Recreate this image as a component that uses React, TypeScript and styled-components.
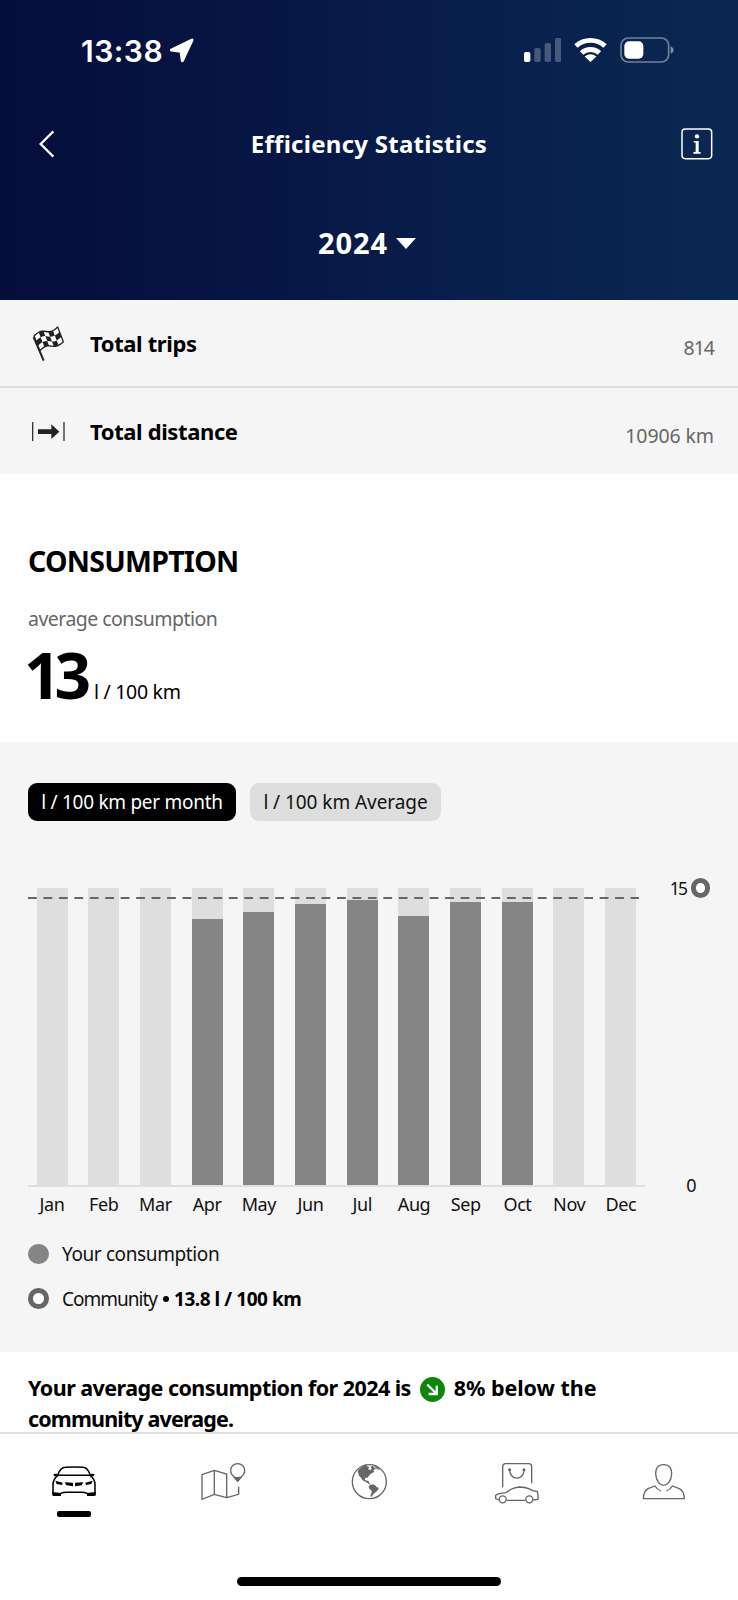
import React from "react";
import styled, { createGlobalStyle } from "styled-components";

const GlobalStyle = createGlobalStyle`
  * { box-sizing: border-box; }
  body { margin: 0; background: #fff; }
`;

const Screen = styled.div`
  width: 738px;
  height: 1600px;
  display: flex;
  flex-direction: column;
  overflow: hidden;
  background: #fefefe;
  color: #000;
  font-family: "Noto Sans", sans-serif;
  white-space: nowrap;
`;

const Header = styled.header`
  flex: none;
  height: 300px;
  color: #fff;
  background: linear-gradient(90deg, #050d3b 0%, #071644 35%, #081e4c 62%, #0a2852 100%);
`;

const StatusBar = styled.div`
  height: 100px;
  padding: 0 64px 0 81px;
  display: flex;
  align-items: center;
`;

const Clock = styled.span`
  font: 600 30px/40px Inter, sans-serif;
  letter-spacing: 0.5px;
  margin: 2px 6px 0 0;
`;

const StatusIcons = styled.div`
  margin-left: auto;
  display: flex;
  align-items: center;
  gap: 13px;
`;

const NavBar = styled.div`
  height: 87px;
  padding: 0 25px 0 38px;
  display: grid;
  grid-template-columns: 60px 1fr 73px;
  align-items: center;
  svg:last-child { justify-self: end; }
`;

const Title = styled.h1`
  margin: 0;
  font-size: 24px;
  font-weight: 700;
  line-height: 40px;
  letter-spacing: 0.27px;
  text-align: center;
`;

const YearPicker = styled.div`
  height: 112px;
  padding-left: 318px;
  display: flex;
  align-items: center;
  gap: 8px;
  font-size: 29px;
  font-weight: 700;
  letter-spacing: 0.9px;
  line-height: 40px;
`;

const Row = styled.div<{ $divided?: boolean }>`
  flex: none;
  height: ${(p) => (p.$divided ? 88 : 86)}px;
  border-bottom: ${(p) => (p.$divided ? "2px solid #dedede" : "0")};
  background: #f5f5f5;
  padding: 0 24px 0 29px;
  display: flex;
  align-items: center;
`;

const RowTitle = styled.span`
  margin-left: 21px;
  font-size: 22px;
  font-weight: 700;
  letter-spacing: -0.38px;
`;

const RowValue = styled.span<{ $spacing: number }>`
  margin: 9px 0 0 auto;
  font-size: 19.5px;
  color: #666;
  letter-spacing: ${(p) => p.$spacing}px;
`;

const Summary = styled.section`
  flex: none;
  height: 268px;
  padding: 67px 28px 0;
`;

const Heading = styled.h2`
  margin: 0;
  font-size: 28.5px;
  font-weight: 700;
  line-height: 40px;
  letter-spacing: -0.73px;
`;

const Caption = styled.div`
  margin-top: 23px;
  font-size: 19.5px;
  line-height: 30px;
  letter-spacing: -0.53px;
  color: #666;
`;

const Reading = styled.div`
  margin: 1px 0 0 -4px;
  display: flex;
  align-items: baseline;
`;

const BigNumber = styled.strong`
  width: 70px;
  font-size: 64px;
  line-height: 80px;
  letter-spacing: -6px;
`;

const Unit = styled.span`
  font-size: 19.5px;
  letter-spacing: -0.3px;
`;

const ChartSection = styled.section`
  flex: none;
  height: 610px;
  padding: 41px 28px 0 28px;
  background: #f5f5f5;
`;

const Chips = styled.div`
  display: flex;
  gap: 14px;
`;

const Chip = styled.button<{ $active?: boolean; $width: number }>`
  width: ${(p) => p.$width}px;
  height: 38px;
  padding: 0;
  border: 0;
  border-radius: 9px;
  background: ${(p) => (p.$active ? "#000" : "#dedede")};
  color: ${(p) => (p.$active ? "#fff" : "#111")};
  font: 400 19px/38px "Noto Sans", sans-serif;
  letter-spacing: ${(p) => (p.$active ? -0.28 : -0.06)}px;
`;

const Chart = styled.div`
  margin-top: 67px;
  display: flex;
`;

const Plot = styled.div`
  position: relative;
  width: 617px;
  height: 299px;
  padding: 0 8.5px;
  border-bottom: 2px solid #dedede;
  display: flex;
  justify-content: space-between;
`;

const Track = styled.div`
  width: 31px;
  height: 100%;
  background: #dedede;
  display: flex;
  align-items: flex-end;
`;

const Fill = styled.div`
  width: 100%;
  background: #858585;
`;

const CommunityLine = styled.svg`
  position: absolute;
  left: 0;
  top: 9px;
`;

const Axis = styled.div`
  width: 65.5px;
  height: 299px;
  display: flex;
  flex-direction: column;
  justify-content: space-between;
  align-items: flex-end;
`;

const AxisLabel = styled.div<{ $end?: boolean }>`
  height: 20px;
  margin: ${(p) => (p.$end ? "0 13.5px -8px 0" : "-10px 0 0")};
  display: flex;
  align-items: center;
  gap: 4px;
  font-size: ${(p) => (p.$end ? 18 : 17.5)}px;
  letter-spacing: ${(p) => (p.$end ? 0 : -1.6)}px;
  color: #111;
`;

const Months = styled.div`
  width: 617px;
  margin-top: 2px;
  padding: 0 8.5px;
  display: flex;
  justify-content: space-between;
`;

const Month = styled.span`
  width: 31px;
  display: flex;
  justify-content: center;
  font-size: 18px;
  line-height: 30px;
  letter-spacing: -0.4px;
  color: #111;
`;

const Legend = styled.div`
  margin-top: 20px;
  display: flex;
  flex-direction: column;
  gap: 14.5px;
`;

const LegendItem = styled.div`
  height: 30px;
  display: flex;
  align-items: center;
  font-size: 19px;
  letter-spacing: -0.39px;
  color: #111;
`;

const Dot = styled.span<{ $ring?: boolean; $size: number }>`
  flex: none;
  width: ${(p) => p.$size}px;
  height: ${(p) => p.$size}px;
  border-radius: 50%;
  border: ${(p) => (p.$ring ? "5.4px solid #666" : "0")};
  background: ${(p) => (p.$ring ? "#fff" : "#858585")};
`;

const LegendText = styled.span<{ $tight?: boolean }>`
  margin-left: 13.5px;
  letter-spacing: ${(p) => (p.$tight ? "-1px" : "inherit")};
`;

const LegendValue = styled.strong`
  margin-left: 5px;
  color: #000;
  letter-spacing: -0.45px;
`;

const Bullet = styled.span`
  width: 6px;
  height: 6px;
  margin: 1px 0 0 6px;
  border-radius: 50%;
  background: #000;
`;

const Insight = styled.section`
  flex: none;
  height: 80px;
  padding: 20px 28px 0;
  font-size: 21.5px;
  font-weight: 700;
  line-height: 31px;
`;

const InsightLine = styled.div`
  height: 31px;
  display: flex;
  align-items: center;
  svg { margin: 3px 9px 0 9px; }
`;

const InsightText = styled.span<{ $spacing: number }>`
  letter-spacing: ${(p) => p.$spacing}px;
`;

const TabBar = styled.nav`
  flex: none;
  height: 168px;
  border-top: 2px solid #dedede;
  background: #fefefe;
  display: flex;
  flex-direction: column;
  align-items: center;
`;

const Tabs = styled.div`
  width: 100%;
  height: 143px;
  padding-top: 27px;
  display: grid;
  grid-template-columns: repeat(5, 1fr);
`;

const Tab = styled.div`
  display: flex;
  flex-direction: column;
  align-items: center;
  svg { display: block; }
`;

const Indicator = styled.span`
  width: 34px;
  height: 5.5px;
  margin-top: 5px;
  border-radius: 2px;
  background: #000;
`;

const HomeBar = styled.div`
  width: 264px;
  height: 9px;
  border-radius: 5px;
  background: #000;
`;

const LocationArrow = () => (
  <svg width="26" height="26" viewBox="507 112 78 78">
    <path d="M514 151 L576 121 L547 183 L543 155 Z" fill="#fff" stroke="#fff" strokeWidth="9" strokeLinejoin="round" />
  </svg>
);

const Signal = () => (
  <svg width="37.5" height="26" viewBox="468 111 112.5 78" fill="#fff">
    <rect x="468" y="156" width="19" height="30" rx="5" />
    <g opacity=".25">
      <rect x="499" y="144" width="19" height="42" rx="5" />
      <rect x="530" y="129" width="19" height="57" rx="5" />
      <rect x="561" y="114" width="19" height="72" rx="5" />
    </g>
  </svg>
);

const Wifi = () => (
  <svg width="33" height="26" viewBox="618 110 100 78" fill="none" stroke="#fff" strokeWidth="15">
    <path d="M624 137 A65 65 0 0 1 712 137" />
    <path d="M641 158 A40 40 0 0 1 695 158" />
    <path d="M668 185 L650 169 Q668 154 686 169 Z" fill="#fff" stroke="none" />
  </svg>
);

const Battery = () => (
  <svg width="54" height="26" viewBox="755 110 162 78">
    <rect x="758" y="113" width="143" height="72" rx="22" fill="none" stroke="#fff" strokeOpacity=".42" strokeWidth="5" />
    <rect x="768" y="123" width="57" height="52" rx="14" fill="#fff" />
    <path d="M907 138 Q916 143 916 149 Q916 155 907 160 Z" fill="#fff" fillOpacity=".5" />
  </svg>
);

const BackIcon = () => (
  <svg width="18" height="30" viewBox="114 388 54 90" fill="none" stroke="#fff" strokeWidth="7">
    <path d="M160 395 L122 433 L160 471" />
  </svg>
);

const InfoIcon = () => (
  <svg width="32" height="32" viewBox="938 383 96 96">
    <rect x="941" y="386" width="89" height="89" rx="10" fill="none" stroke="#fff" strokeWidth="4.5" />
    <circle cx="986" cy="408" r="6.5" fill="#fff" />
    <path d="M976 422 H991 V454 L997 456 V460 H975 V456 L982 454 V427 L976 426 Z" fill="#fff" />
  </svg>
);

const flagPoint = (u: number, v: number) =>
  `${102 + u * 71 + v * 17},${140 - u * 27 + v * 44 - 6 * Math.sin(2 * Math.PI * u)}`;

const flagCell = (col: number, row: number) => {
  const u = [0, 0.5, 1].map((s) => (col + s) / 5);
  const top = u.map((x) => flagPoint(x, row / 3));
  const bottom = u.map((x) => flagPoint(x, (row + 1) / 3)).reverse();
  return [...top, ...bottom].join(" ");
};

const flagOutline = () => {
  const u = Array.from({ length: 13 }, (_, i) => i / 12);
  return [...u.map((x) => flagPoint(x, 0)), ...[...u].reverse().map((x) => flagPoint(x, 1))].join(" ");
};

const FlagIcon = () => (
  <svg width="40" height="40" viewBox="87 101 120 120">
    <polygon points={flagOutline()} fill="#fff" stroke="#222" strokeWidth="4" strokeLinejoin="round" />
    {Array.from({ length: 15 }, (_, i) => [i % 5, Math.floor(i / 5)])
      .filter(([c, r]) => (c + r) % 2 === 1)
      .map(([c, r]) => (
        <polygon key={`${c}-${r}`} points={flagCell(c, r)} fill="#222" />
      ))}
    <path d="M101 143 L131 214" stroke="#222" strokeWidth="6" />
  </svg>
);

const DistanceIcon = () => (
  <svg width="40" height="30" viewBox="87 380 120 90" fill="#222">
    <path d="M98 398 V455 M192 398 V455" stroke="#333" strokeWidth="4" />
    <path d="M114 420 H154 V405 L178 427 L154 449 V434 H114 Z" />
  </svg>
);

const DownTrendIcon = () => (
  <svg width="25" height="25" viewBox="0 0 25 25">
    <circle cx="12.5" cy="12.5" r="12.5" fill="#0c870c" />
    <path d="M7.2 7.5 L16 16.3 M16.8 8.8 V17 H8.6" fill="none" stroke="#fff" strokeWidth="2.3" />
  </svg>
);

const TabIcon = styled.svg.attrs({ width: 50, height: 45, fill: "none" })<{ $dark?: boolean }>`
  stroke: ${(p) => (p.$dark ? "#000" : "#666")};
  stroke-width: ${(p) => (p.$dark ? 4.6 : 4)};
`;

const CarIcon = () => (
  <TabIcon $dark viewBox="147 333 150 135">
    <path d="M173 375 Q182 352 196 352 Q222 350 249 352 Q262 352 271 375" />
    <path d="M171 376 H273" />
    <path d="M160 372 L170 371 L173 379 L163 379 Z M284 372 L274 371 L271 379 L281 379 Z" fill="#000" stroke="none" />
    <path d="M173 377 Q159 388 159 404 V434 M271 377 Q285 388 285 404 V434" />
    <path d="M157 426 L183 429 V438 H160 Q157 438 157 434 Z M287 426 L261 429 V438 H284 Q287 438 287 434 Z" fill="#000" stroke="none" />
    <path d="M180 431 Q190 427 200 427 H244 Q254 427 264 431" />
    <path d="M166 392 L188 398 L186 405 L170 402 Z M278 392 L256 398 L258 405 L274 402 Z M194 397 L219 398 V409 L199 406 Z M250 397 L225 398 V409 L245 406 Z" fill="#000" stroke="none" />
  </TabIcon>
);

const MapIcon = () => (
  <TabIcon viewBox="589 333 150 135">
    <path d="M607 374 L644 361 L681 372 V443 L644 433 L607 448 Z M644 361 V433 M681 443 L717 433 V410" />
    <path d="M714 394 L697 374 A21 21 0 1 1 731 374 Z" />
    <path d="M714 396 L699 378 Q714 384 729 378 Z" fill="#666" stroke="none" />
  </TabIcon>
);

const GlobeIcon = () => (
  <TabIcon viewBox="12 18 150 135">
    <circle cx="88" cy="80" r="51" />
    <g fill="#666" stroke="none">
      <path d="M53 47 Q64 33 82 29 L80 34 L88 36 L84 42 L91 46 L95 40 L91 35 L98 33 L108 42 L100 45 L103 51 L95 55 L88 61 L83 68 L77 68 L74 73 L79 77 L85 77 L88 84 L93 87 L88 88 L79 82 L68 76 L61 66 L57 62 Z" />
      <path d="M96 31 L112 37 L121 45 L112 43 L105 37 Z" />
      <path d="M90 90 L99 88 L107 92 L109 96 L116 98 L114 105 L108 111 L101 116 L94 126 L91 123 L96 109 L88 101 L86 95 Z" />
    </g>
  </TabIcon>
);

const StoreIcon = () => (
  <TabIcon viewBox="371 333 150 135">
    <path d="M403 412 V350 Q403 341 412 341 H481 Q490 341 490 350 V400" />
    <path d="M424 359 C424 393 467 393 467 359" />
    <circle cx="424" cy="359" r="2.6" fill="#666" />
    <circle cx="467" cy="359" r="2.6" fill="#666" />
    <circle cx="403" cy="448" r="10.5" />
    <circle cx="483" cy="448" r="10.5" />
    <path d="M391 450 L382 446 V436 Q390 430 413 428 Q433 412 452 411 Q477 411 493 422 L507 425 Q510 438 509 448 L495 450 M415 451 H471" />
  </TabIcon>
);

const ProfileIcon = () => (
  <TabIcon viewBox="814 333 150 135">
    <path d="M888 344 C906 344 913 356 912 372 C911 393 899 406 888 406 C877 406 865 393 864 372 C863 356 870 344 888 344 Z" />
    <path d="M880 423 Q868 418 862 408 L841 416 Q828 423 827 446 H950 Q949 423 935 416 L914 408 Q908 418 896 423" />
  </TabIcon>
);

const PLOT_HEIGHT = 297;
const months: { name: string; fill: number }[] = [
  { name: "Jan", fill: 0 },
  { name: "Feb", fill: 0 },
  { name: "Mar", fill: 0 },
  { name: "Apr", fill: 266.5 },
  { name: "May", fill: 272.7 },
  { name: "Jun", fill: 281 },
  { name: "Jul", fill: 284.7 },
  { name: "Aug", fill: 268.6 },
  { name: "Sep", fill: 282.8 },
  { name: "Oct", fill: 282.8 },
  { name: "Nov", fill: 0 },
  { name: "Dec", fill: 0 },
];

export default function App() {
  return (
    <Screen>
      <GlobalStyle />
      <Header>
        <StatusBar>
          <Clock>13:38</Clock>
          <LocationArrow />
          <StatusIcons>
            <Signal />
            <Wifi />
            <Battery />
          </StatusIcons>
        </StatusBar>
        <NavBar>
          <BackIcon />
          <Title>Efficiency Statistics</Title>
          <InfoIcon />
        </NavBar>
        <YearPicker>
          2024
          <svg width="20" height="11" viewBox="0 0 20 11">
            <path d="M0 0 H20 L10 11 Z" fill="#fff" />
          </svg>
        </YearPicker>
      </Header>

      <Row $divided>
        <FlagIcon />
        <RowTitle>Total trips</RowTitle>
        <RowValue $spacing={-1}>814</RowValue>
      </Row>
      <Row>
        <DistanceIcon />
        <RowTitle>Total distance</RowTitle>
        <RowValue $spacing={-0.1}>10906 km</RowValue>
      </Row>

      <Summary>
        <Heading>CONSUMPTION</Heading>
        <Caption>average consumption</Caption>
        <Reading>
          <BigNumber>13</BigNumber>
          <Unit>l / 100 km</Unit>
        </Reading>
      </Summary>

      <ChartSection>
        <Chips>
          <Chip $active $width={208}>l / 100 km per month</Chip>
          <Chip $width={191}>l / 100 km Average</Chip>
        </Chips>
        <Chart>
          <Plot>
            {months.map((m) => (
              <Track key={m.name}>
                <Fill style={{ height: `${(m.fill / PLOT_HEIGHT) * 100}%` }} />
              </Track>
            ))}
            <CommunityLine width="612" height="2">
              <path d="M0 1 H611" stroke="#666" strokeWidth="2" strokeDasharray="8.8 6.65" />
            </CommunityLine>
          </Plot>
          <Axis>
            <AxisLabel>
              15
              <Dot $ring $size={19.5} />
            </AxisLabel>
            <AxisLabel $end>0</AxisLabel>
          </Axis>
        </Chart>
        <Months>
          {months.map((m) => (
            <Month key={m.name}>{m.name}</Month>
          ))}
        </Months>
        <Legend>
          <LegendItem>
            <Dot $size={20.5} />
            <LegendText>Your consumption</LegendText>
          </LegendItem>
          <LegendItem>
            <Dot $ring $size={20.5} />
            <LegendText $tight>Community</LegendText>
            <Bullet />
            <LegendValue>13.8 l / 100 km</LegendValue>
          </LegendItem>
        </Legend>
      </ChartSection>

      <Insight>
        <InsightLine>
          <InsightText $spacing={-0.55}>Your average consumption for 2024 is</InsightText>
          <DownTrendIcon />
          <InsightText $spacing={-0.05}>8% below the</InsightText>
        </InsightLine>
        <InsightLine>
          <InsightText $spacing={-0.85}>community average.</InsightText>
        </InsightLine>
      </Insight>

      <TabBar>
        <Tabs>
          <Tab>
            <CarIcon />
            <Indicator />
          </Tab>
          <Tab>
            <MapIcon />
          </Tab>
          <Tab>
            <GlobeIcon />
          </Tab>
          <Tab>
            <StoreIcon />
          </Tab>
          <Tab>
            <ProfileIcon />
          </Tab>
        </Tabs>
        <HomeBar />
      </TabBar>
    </Screen>
  );
}
